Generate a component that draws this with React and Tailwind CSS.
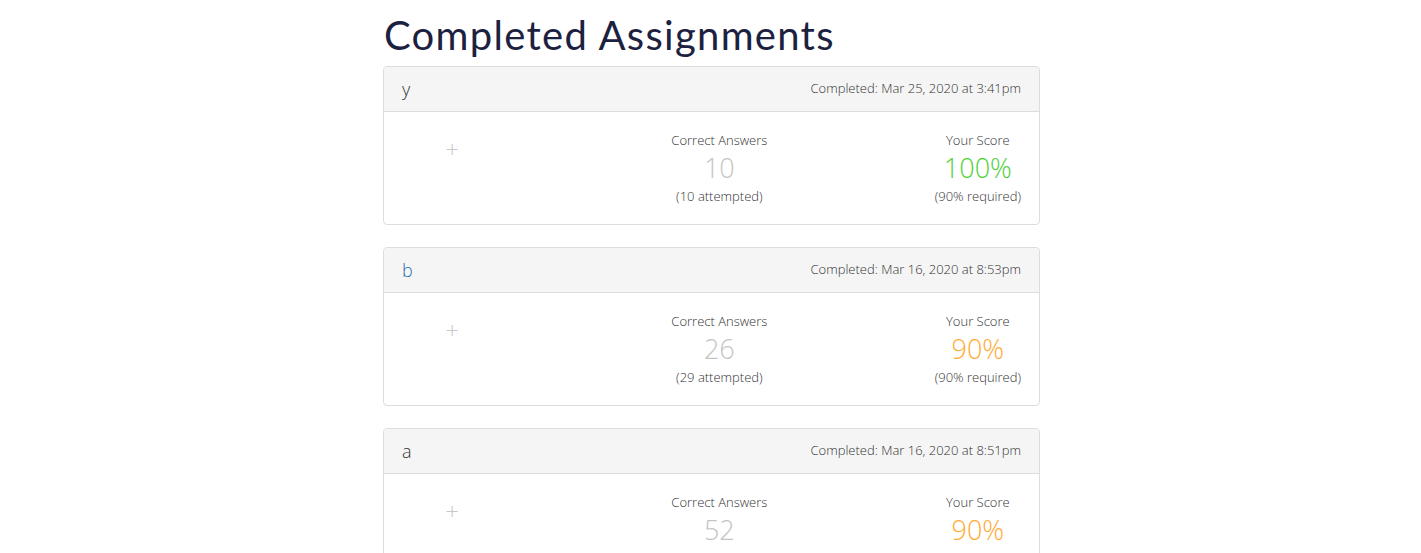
const assignments = [
  {
    name: "y",
    nameColor: "text-[#333333]",
    completed: "Completed: Mar 25, 2020 at 3:41pm",
    correct: 10,
    attempted: 10,
    score: "100%",
    scoreColor: "text-[#4fd13c]",
    required: "90%",
  },
  {
    name: "b",
    nameColor: "text-[#2a6fb0]",
    completed: "Completed: Mar 16, 2020 at 8:53pm",
    correct: 26,
    attempted: 29,
    score: "90%",
    scoreColor: "text-[#ffaa33]",
    required: "90%",
  },
  {
    name: "a",
    nameColor: "text-[#333333]",
    completed: "Completed: Mar 16, 2020 at 8:51pm",
    correct: 52,
    attempted: 58,
    score: "90%",
    scoreColor: "text-[#ffaa33]",
    required: "90%",
  },
];

const AssignmentCard = ({ item }) => {
  return (
    <div className="rounded-[4px] border border-[#dddddd] bg-white">
      {/* Heading */}
      <div className="flex h-[45px] items-center justify-between rounded-t-[4px] border-b border-[#dddddd] bg-[#f5f5f5] px-[18px]">
        <span className={`text-[18px] font-light ${item.nameColor}`}>{item.name}</span>
        <span className="text-[13px] font-light text-[#333333]">{item.completed}</span>
      </div>

      {/* Body */}
      <div className="flex px-[18px] pb-[19px] pt-[19px] text-[#333333]">
        <div className="flex w-[100px] justify-center pt-[6px]">
          <span className="text-[24px] font-extralight leading-none text-[#c8c8c8]">+</span>
        </div>
        <div className="flex flex-1 flex-col items-center pl-[2px]">
          <span className="text-[13px] font-light leading-[18px]">Correct Answers</span>
          <span className="text-[27px] font-light leading-[38px] text-[#c4c4c4]">{item.correct}</span>
          <span className="text-[13px] font-light leading-[18px]">({item.attempted} attempted)</span>
        </div>
        <div className="flex flex-col items-center">
          <span className="text-[13px] font-light leading-[18px]">Your Score</span>
          <span className={`text-[27px] font-light leading-[38px] ${item.scoreColor}`}>{item.score}</span>
          <span className="text-[13px] font-light leading-[18px]">({item.required} required)</span>
        </div>
      </div>
    </div>
  );
};

export default function App() {
  return (
    <div className="min-h-screen bg-white pl-[2px] font-['Open_Sans',sans-serif]">
      <div className="mx-auto w-[657px] pt-[12px]">
        <h1 className="mb-[8px] pl-[1px] font-['Lato',sans-serif] text-[40px] font-normal leading-[46px] tracking-[1.3px] text-[#1c2140]">
          Completed Assignments
        </h1>
        <div className="flex flex-col gap-[22px]">
          {assignments.map((item) => (
            <AssignmentCard key={item.name} item={item} />
          ))}
        </div>
      </div>
    </div>
  );
}
